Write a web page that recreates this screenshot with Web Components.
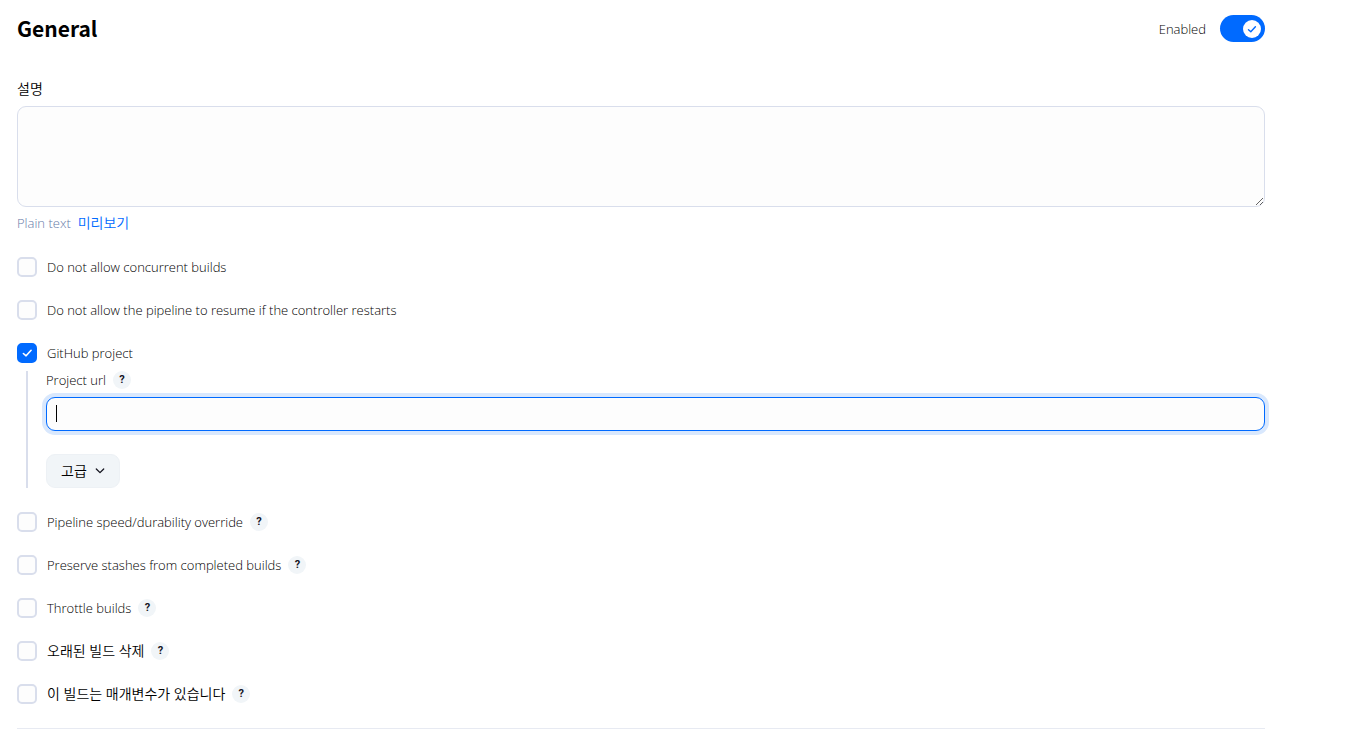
<!DOCTYPE html>
<html lang="ko">
<head>
    <meta charset="UTF-8">
    <meta name="viewport" content="width=device-width, initial-scale=1.0">
    <title>General</title>
    <style>
        body {
            --accent: #006aff;
            --border: #d9deec;
            --field: #fdfdfd;
            --soft: #f1f5f8;
            margin: 0;
            background: #fff;
            color: #000;
            font-family: "Open Sans", "Noto Sans CJK KR", sans-serif;
            font-size: 13px;
            font-weight: 350;
            line-height: 20px;
        }
    </style>
</head>
<body>
    <config-section heading="General">
        <toggle-switch slot="action" label="Enabled" checked></toggle-switch>
        <description-field label="설명" format="Plain text" preview="미리보기"></description-field>
        <option-list>
            <option-row label="Do not allow concurrent builds"></option-row>
            <option-row label="Do not allow the pipeline to resume if the controller restarts"></option-row>
            <option-row label="GitHub project" checked>
                <url-field label="Project url"></url-field>
                <advanced-button>고급</advanced-button>
            </option-row>
            <option-row label="Pipeline speed/durability override" help></option-row>
            <option-row label="Preserve stashes from completed builds" help></option-row>
            <option-row label="Throttle builds" help></option-row>
            <option-row label="오래된 빌드 삭제" korean help></option-row>
            <option-row label="이 빌드는 매개변수가 있습니다" korean help></option-row>
        </option-list>
    </config-section>

    <template id="config-section">
        <style>
            :host {
                display: block;
                padding: 14px 95px 0 17px;
            }
            header {
                display: flex;
                align-items: center;
                justify-content: space-between;
                height: 29px;
                margin-bottom: 36px;
            }
            h2 {
                margin: 0;
                font: 700 21px/29px "Noto Sans CJK KR", sans-serif;
            }
            hr {
                height: 1px;
                margin: 24px 0 0;
                border: 0;
                background: #e7eaf2;
            }
        </style>
        <header><h2></h2><slot name="action"></slot></header>
        <slot></slot>
        <hr>
    </template>

    <template id="toggle-switch">
        <style>
            :host {
                display: block;
            }
            label {
                display: flex;
                align-items: center;
                gap: 14px;
            }
            .track {
                display: grid;
                width: 45px;
                height: 27px;
            }
            input, svg {
                grid-area: 1 / 1;
            }
            input {
                appearance: none;
                width: 45px;
                height: 27px;
                margin: 0;
                border-radius: 14px;
                background: #cbd2e0;
            }
            input:checked {
                background: var(--accent);
            }
            svg {
                place-self: center end;
                margin-right: 4px;
                pointer-events: none;
            }
        </style>
        <label>
            <span class="text"></span>
            <span class="track">
                <input type="checkbox" role="switch">
                <svg width="18" height="18" viewBox="0 0 18 18">
                    <circle cx="9" cy="9" r="9" fill="#fff"/>
                    <path d="M5.5 9.7l2.3 2.1 4.6-5" fill="none" stroke="#006aff" stroke-width="1.4" stroke-linecap="round" stroke-linejoin="round"/>
                </svg>
            </span>
        </label>
    </template>

    <template id="description-field">
        <style>
            :host {
                display: block;
                margin-bottom: 24px;
            }
            label {
                display: block;
                margin-bottom: 7px;
                font-size: 14px;
            }
            textarea {
                display: block;
                box-sizing: border-box;
                width: 100%;
                height: 101px;
                padding: 8px;
                border: 1px solid var(--border);
                border-radius: 9px;
                background: var(--field);
                font: inherit;
                resize: vertical;
                outline: none;
            }
            .hint {
                display: flex;
                gap: 7px;
                margin-top: 6px;
                color: #667aa8;
            }
            a {
                color: var(--accent);
                font-size: 14px;
                text-decoration: none;
            }
        </style>
        <label for="description"></label>
        <textarea id="description"></textarea>
        <div class="hint"><span></span><a href="#"></a></div>
    </template>

    <template id="option-list">
        <style>
            :host {
                display: flex;
                flex-direction: column;
                gap: 23px;
            }
        </style>
        <slot></slot>
    </template>

    <template id="option-row">
        <style>
            :host {
                display: flow-root;
            }
            .row {
                display: flex;
                align-items: center;
                gap: 7px;
            }
            :host([korean]) .row {
                font-size: 14px;
            }
            label {
                display: flex;
                align-items: center;
                gap: 10px;
            }
            .box {
                display: grid;
            }
            input, svg {
                grid-area: 1 / 1;
            }
            input {
                appearance: none;
                box-sizing: border-box;
                width: 20px;
                height: 20px;
                margin: 0;
                border: 2px solid var(--border);
                border-radius: 5px;
                background: var(--field);
            }
            input:checked {
                border-color: var(--accent);
                background: var(--accent);
            }
            svg {
                pointer-events: none;
                visibility: hidden;
            }
            input:checked + svg {
                visibility: visible;
            }
            .nested {
                margin: 8px 0 1px 9px;
                padding-left: 18px;
                border-left: 2px solid var(--border);
            }
        </style>
        <div class="row">
            <label>
                <span class="box">
                    <input type="checkbox">
                    <svg width="20" height="20" viewBox="0 0 20 20">
                        <path d="M6.4 10.5l2.7 2.3 5-5.5" fill="none" stroke="#fff" stroke-width="1.6" stroke-linecap="round" stroke-linejoin="round"/>
                    </svg>
                </span>
                <span class="text"></span>
            </label>
        </div>
        <div class="nested"><slot></slot></div>
    </template>

    <template id="help-button">
        <style>
            :host {
                display: block;
            }
            button {
                display: block;
                width: 18px;
                height: 18px;
                padding: 0;
                border: 0;
                border-radius: 50%;
                background: var(--soft);
                color: #14141f;
                font: 700 11px/18px Roboto, sans-serif;
                text-align: center;
            }
        </style>
        <button type="button">?</button>
    </template>

    <template id="url-field">
        <style>
            :host {
                display: block;
            }
            .caption {
                display: flex;
                align-items: center;
                gap: 7px;
                height: 18px;
                margin-bottom: 8px;
            }
            input {
                display: block;
                box-sizing: border-box;
                width: 100%;
                height: 34px;
                padding: 0 9px;
                border: 1px solid var(--border);
                border-radius: 9px;
                background: var(--field);
                color: #000;
                font: inherit;
                outline: none;
            }
            input:focus {
                border-color: var(--accent);
                box-shadow: 0 0 0 4px #d9e8fd;
            }
            /* steady caret while the field is empty */
            input:focus:placeholder-shown {
                background: linear-gradient(#000, #000) 9px 7px / 1px 17px no-repeat var(--field);
                caret-color: transparent;
            }
        </style>
        <div class="caption"><label for="url"></label><help-button></help-button></div>
        <input id="url" type="text" placeholder=" ">
    </template>

    <template id="advanced-button">
        <style>
            :host {
                display: block;
                margin-top: 23px;
            }
            button {
                display: flex;
                align-items: center;
                gap: 8px;
                height: 34px;
                padding: 0 14px;
                border: 1px solid #edf1f5;
                border-radius: 9px;
                background: var(--soft);
                color: #000;
                font: inherit;
                font-size: 14px;
            }
        </style>
        <button type="button">
            <slot></slot>
            <svg width="10" height="10" viewBox="0 0 10 10">
                <path d="M1.3 3L5 6.6 8.7 3" fill="none" stroke="#14141f" stroke-width="1.3" stroke-linecap="round" stroke-linejoin="round"/>
            </svg>
        </button>
    </template>

    <script>
        // every element clones the template that carries its own tag name
        class BaseElement extends HTMLElement {
            constructor() {
                super();
                const template = document.getElementById(this.localName);
                this.attachShadow({mode: 'open'}).appendChild(template.content.cloneNode(true));
            }
            find(selector) {
                return this.shadowRoot.querySelector(selector);
            }
        }

        class ConfigSection extends BaseElement {
            connectedCallback() {
                this.find('h2').textContent = this.getAttribute('heading');
            }
        }

        class ToggleSwitch extends BaseElement {
            connectedCallback() {
                this.find('.text').textContent = this.getAttribute('label');
                this.find('input').checked = this.hasAttribute('checked');
            }
        }

        class DescriptionField extends BaseElement {
            connectedCallback() {
                this.find('label').textContent = this.getAttribute('label');
                this.find('.hint span').textContent = this.getAttribute('format');
                this.find('a').textContent = this.getAttribute('preview');
            }
        }

        class OptionList extends BaseElement {}

        class HelpButton extends BaseElement {}

        class OptionRow extends BaseElement {
            connectedCallback() {
                const input = this.find('input');
                this.find('.text').textContent = this.getAttribute('label');
                input.checked = this.hasAttribute('checked');
                input.addEventListener('change', () => this.update());
                if (this.hasAttribute('help')) {
                    this.find('.row').appendChild(document.createElement('help-button'));
                }
                this.update();
            }
            // nested settings are only shown while the option is ticked
            update() {
                this.find('.nested').hidden = !this.children.length || !this.find('input').checked;
            }
        }

        class UrlField extends BaseElement {
            connectedCallback() {
                this.find('label').textContent = this.getAttribute('label');
                this.find('input').focus();
            }
        }

        class AdvancedButton extends BaseElement {}

        customElements.define('config-section', ConfigSection);
        customElements.define('toggle-switch', ToggleSwitch);
        customElements.define('description-field', DescriptionField);
        customElements.define('option-list', OptionList);
        customElements.define('help-button', HelpButton);
        customElements.define('option-row', OptionRow);
        customElements.define('url-field', UrlField);
        customElements.define('advanced-button', AdvancedButton);
    </script>
</body>
</html>
